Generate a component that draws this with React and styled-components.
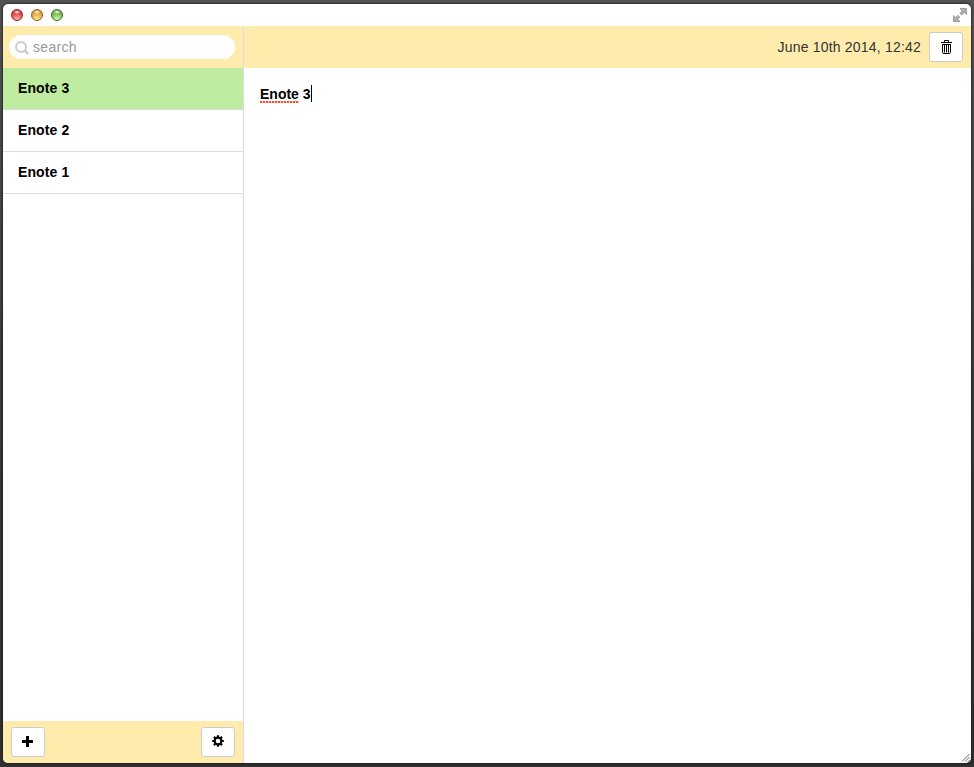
import React, { useState } from 'react';
import styled, { createGlobalStyle } from 'styled-components';

const GlobalStyle = createGlobalStyle`
    * {
        box-sizing: border-box;
    }

    body {
        margin: 0;
        background: linear-gradient(#535254, #3b3a3c 50%, #313032);
        font-family: "Liberation Sans", Arial, sans-serif;
        font-size: 14px;
        line-height: 20px;
        overflow: hidden;
    }
`;

const Desktop = styled.div`
    height: 100vh;
    padding: 4px 3px;
`;

const Window = styled.div`
    position: relative;
    display: flex;
    flex-direction: column;
    height: 100%;
    background: #fff;
    border-radius: 5px;
    box-shadow: 0 0 2px 1px rgba(0, 0, 0, 0.45);
    overflow: hidden;
`;

const TitleBar = styled.div`
    display: flex;
    align-items: center;
    gap: 8px;
    height: 22px;
    padding: 0 4px 0 8px;
`;

const Light = styled.span`
    width: 12px;
    height: 12px;
    border-radius: 50%;
    border: 1px solid ${props => props.edge};
    background:
        radial-gradient(ellipse 3.5px 2px at 50% 20%, rgba(255, 255, 255, 0.95), rgba(255, 255, 255, 0)),
        radial-gradient(circle at 50% 95%, ${props => props.glow}, ${props => props.color} 75%);
`;

const FullScreen = styled.svg`
    margin-left: auto;
`;

const Body = styled.div`
    display: flex;
    flex: 1;
    min-height: 0;
`;

const Sidebar = styled.div`
    display: flex;
    flex-direction: column;
    width: 241px;
    border-right: 1px solid #ddd;
`;

const Toolbar = styled.div`
    display: flex;
    align-items: center;
    justify-content: ${props => props.justify || 'space-between'};
    gap: 8px;
    flex: none;
    height: 42px;
    padding: ${props => props.pad || '0 8px'};
    background: #ffecad;
`;

const SearchBox = styled.label`
    display: flex;
    align-items: center;
    gap: 3px;
    width: 226px;
    height: 24px;
    padding: 0 6px;
    border-radius: 12px;
    background: #fff;
`;

const SearchIconSvg = styled.svg`
    flex: none;
    margin-top: 2px;
`;

const SearchInput = styled.input`
    width: 100%;
    padding: 0;
    border: 0;
    outline: 0;
    background: none;
    font: inherit;
    letter-spacing: 0.3px;

    &::placeholder {
        color: #999;
        opacity: 1;
    }
`;

const NoteList = styled.div`
    flex: 1;
`;

const NoteRow = styled.div`
    height: 42px;
    padding: 10px 15px;
    border-bottom: 1px solid #ddd;
    background: ${props => props.$active ? '#bfeca0' : '#fff'};
    color: #000;
    font-weight: bold;
    letter-spacing: 0.1px;
    cursor: pointer;
`;

const Button = styled.button`
    display: flex;
    align-items: center;
    justify-content: center;
    width: 34px;
    height: 30px;
    padding: 0;
    border: 1px solid #ccc;
    border-radius: 3px;
    background: #fff;
    color: #000;
`;

const Main = styled.div`
    display: flex;
    flex-direction: column;
    flex: 1;
`;

const NoteDate = styled.span`
    color: #333;
    letter-spacing: 0.2px;
`;

const Editor = styled.div`
    display: flex;
    flex: 1;
    align-items: flex-start;
    padding: 16px;
    color: #000;
    font-weight: bold;
    line-height: 18px;
    white-space: pre;
`;

const Misspelled = styled.span`
    height: 18px;
    margin-top: 1px;
    background: repeating-linear-gradient(90deg, #f4503c 0 2px, #fcc4bc 2px 3px) 0 100% / 100% 2px no-repeat;
`;

const NoteText = styled.span`
    margin-top: 1px;
`;

const Caret = styled.span`
    width: 1px;
    height: 17px;
    margin-top: 1px;
    background: #000;
`;

const ResizeGrip = styled.svg`
    position: absolute;
    right: 1px;
    bottom: 1px;
`;

function SearchIcon() {
    return (
        <SearchIconSvg width="15" height="14" viewBox="0 0 15 14" fill="none" stroke="#c9c9c9" strokeWidth="1.8">
            <circle cx="6" cy="6" r="5" />
            <path d="M9.6 9.6 13.4 13.2" strokeWidth="2.3" />
        </SearchIconSvg>
    );
}

function TrashIcon() {
    return (
        <svg width="12" height="14" viewBox="0 0 12 14" fill="none" stroke="currentColor">
            <path d="M4.5 2V.5h4V2M1 2.5h11" />
            <path d="M2 4.5h9M2.5 4.5v7.8l.7 1.2h6.6l.7-1.2V4.5M4.5 5v7.5M6.5 5v7.5M8.5 5v7.5" />
        </svg>
    );
}

function PlusIcon() {
    return (
        <svg width="12" height="12" viewBox="0 0 12 12" fill="currentColor">
            <path d="M4 0h3v4h4v3H7v4H4V7H0V4h4z" />
        </svg>
    );
}

function GearIcon() {
    const teeth = [0, 45, 90, 135];
    return (
        <svg width="12" height="14" viewBox="0 0 12 14" fill="none" stroke="currentColor">
            <circle cx="6" cy="6" r="3.4" strokeWidth="2.2" />
            {teeth.map(angle => (
                <path
                    key={angle}
                    d="M6 .2v2M6 9.8v2"
                    strokeWidth="2.2"
                    transform={`rotate(${angle} 6 6)`}
                />
            ))}
        </svg>
    );
}

function FullScreenIcon() {
    return (
        <FullScreen width="15" height="14" viewBox="0 0 15 14" fill="#b0b0b0" stroke="#858585" strokeWidth=".7">
            <path d="M8 .5h6.5v6l-2-2-2.7 2.6-1.9-1.8 2.4-2.6z" />
            <path d="M1.5 7.5v6H8l-2.3-2.2 2.1-2.1-1.9-1.8-2.4 2.1z" />
        </FullScreen>
    );
}

const lights = [
    { edge: '#8c2b2e', color: '#d93238', glow: '#ffb0aa' },
    { edge: '#8d6020', color: '#dc942f', glow: '#ffee9a' },
    { edge: '#3f7030', color: '#64aa43', glow: '#d6f9ab' },
];

const notes = ['Enote 3', 'Enote 2', 'Enote 1'];

function App() {
    const [active, setActive] = useState(0);
    const [word, number] = notes[active].split(' ');

    return (
        <Desktop>
            <GlobalStyle />
            <Window>
                <TitleBar>
                    {lights.map(light => <Light key={light.color} {...light} />)}
                    <FullScreenIcon />
                </TitleBar>
                <Body>
                    <Sidebar>
                        <Toolbar pad="0 6px">
                            <SearchBox>
                                <SearchIcon />
                                <SearchInput placeholder="search" />
                            </SearchBox>
                        </Toolbar>
                        <NoteList>
                            {notes.map((note, i) => (
                                <NoteRow key={note} $active={i === active} onClick={() => setActive(i)}>{note}</NoteRow>
                            ))}
                        </NoteList>
                        <Toolbar>
                            <Button><PlusIcon /></Button>
                            <Button><GearIcon /></Button>
                        </Toolbar>
                    </Sidebar>
                    <Main>
                        <Toolbar justify="flex-end">
                            <NoteDate>June 10th 2014, 12:42</NoteDate>
                            <Button><TrashIcon /></Button>
                        </Toolbar>
                        <Editor>
                            <Misspelled>{word}</Misspelled>
                            <NoteText> {number}</NoteText>
                            <Caret />
                        </Editor>
                    </Main>
                </Body>
                <ResizeGrip width="9" height="9" viewBox="0 0 9 9" stroke="#555" strokeWidth=".9">
                    <path d="M1 8.5 8.5 1M4 8.5 8.5 4M7 8.5 8.5 7" />
                </ResizeGrip>
            </Window>
        </Desktop>
    );
}

export default App;
